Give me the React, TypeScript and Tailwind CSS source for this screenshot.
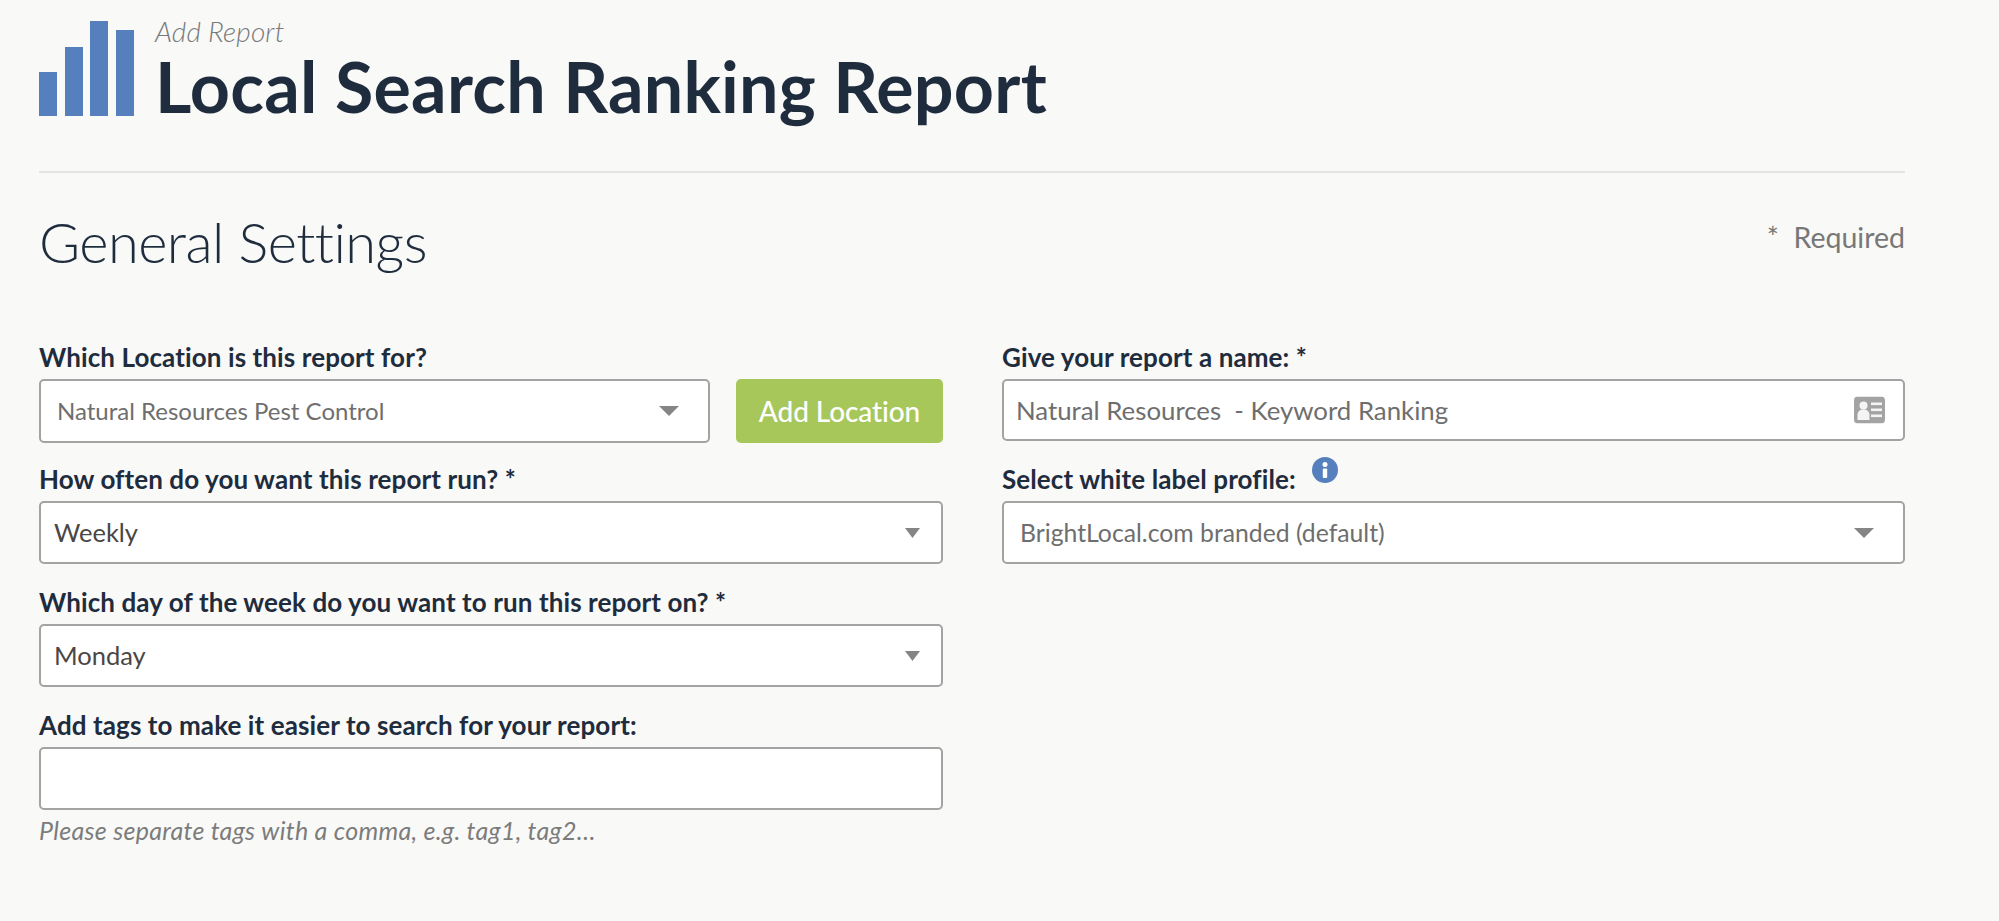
import React from "react";

const font = "font-['Lato','Noto_Sans',sans-serif]";

function Caret({ size = "m" }: { size?: "m" | "s" }) {
  return (
    <svg
      className={`pointer-events-none absolute top-1/2 -translate-y-1/2 ${size === "m" ? "right-[31px] h-[10px] w-[20px]" : "right-[23px] h-[10px] w-[15px]"}`}
      viewBox="0 0 20 10"
      preserveAspectRatio="none"
    >
      <path d="M0 0H20L10 10Z" fill="#858585" />
    </svg>
  );
}

function Field({ label, children, className = "" }: { label: React.ReactNode; children: React.ReactNode; className?: string }) {
  return (
    <div className={className}>
      <label className="block h-[38px] text-[26px] leading-[32px] font-bold tracking-[0.1px] text-[#1e2c3d]">{label}</label>
      {children}
    </div>
  );
}

function Select({ value, text = "text-[#6e6e6e] text-[24px] pl-[16px]", size = "m", h = "h-[63px]" }: { value: string; text?: string; size?: "m" | "s"; h?: string }) {
  return (
    <div className={`relative ${h} w-full`}>
      <select
        value={value}
        onChange={() => {}}
        className={`h-full w-full appearance-none rounded-[5px] border-2 border-[#a3a3a3] bg-white outline-none ${font} ${text}`}
      >
        <option>{value}</option>
      </select>
      <Caret size={size} />
    </div>
  );
}

export default function App() {
  return (
    <div className={`min-h-[921px] bg-[#f9f9f7] pl-[39px] pr-[94px] ${font}`}>
      <header className="flex h-[173px] items-start border-b-2 border-[#e4e4e2] pt-[21px]">
        <svg className="h-[95px] w-[95px] shrink-0" viewBox="0 0 95 95">
          <g fill="#5580bd">
            <rect x="0" y="51" width="18" height="44" />
            <rect x="26" y="26" width="18" height="69" />
            <rect x="51" y="0" width="18" height="95" />
            <rect x="77" y="9" width="18" height="86" />
          </g>
        </svg>
        <div className="ml-[21px] -mt-[7px]">
          <div className="text-[28px] leading-[34px] font-light italic tracking-[0.1px] text-[#77797c]">Add Report</div>
          <h1 className="text-[70px] leading-[76px] font-bold tracking-[0.25px] text-[#1e2c3d]">Local Search Ranking Report</h1>
        </div>
      </header>

      <div className="flex items-start justify-between pt-[33px]">
        <h2 className="text-[56px] leading-[72px] font-light tracking-[-0.55px] text-[#1e2c3d]">General Settings</h2>
        <div className="pt-[13px] text-[28.5px] leading-[36px] text-[#777777]">*&nbsp; Required</div>
      </div>

      <div className="mt-[63px] grid grid-cols-[904px_903px] gap-x-[59px]">
        <div className="flex flex-col">
          <Field label="Which Location is this report for?">
            <div className="flex h-[64px] gap-[26px]">
              <div className="w-[671px]">
                <Select value="Natural Resources Pest Control" h="h-[64px]" />
              </div>
              <button className="w-[207px] rounded-[5px] bg-[#a8c75b] text-[28px] font-medium tracking-[-0.1px] text-white">Add Location</button>
            </div>
          </Field>
          <Field className="mt-[20px]" label="How often do you want this report run? *">
            <Select value="Weekly" text="text-[#4a4644] text-[25.5px] pl-[13px]" size="s" />
          </Field>
          <Field className="mt-[22px]" label="Which day of the week do you want to run this report on? *">
            <Select value="Monday" text="text-[#4a4644] text-[25.5px] pl-[13px]" size="s" />
          </Field>
          <Field className="mt-[22px]" label="Add tags to make it easier to search for your report:">
            <input className="h-[63px] w-full rounded-[5px] border-2 border-[#a3a3a3] bg-white outline-none" />
          </Field>
          <p className="mt-[5px] text-[25px] leading-[30px] italic tracking-[0.3px] text-[#7c7c7c]">Please separate tags with a comma, e.g. tag1, tag2…</p>
        </div>

        <div className="flex flex-col">
          <Field label="Give your report a name: *">
            <div className="relative h-[62px]">
              <input
                readOnly
                value="Natural Resources  - Keyword Ranking"
                className="h-full w-full rounded-[5px] border-2 border-[#a3a3a3] bg-white pl-[12px] text-[25.8px] text-[#6e6e6e] outline-none"
              />
              <svg className="absolute top-1/2 right-[20px] h-[27px] w-[31px] -translate-y-1/2" viewBox="0 0 31 27">
                <rect width="31" height="27" rx="4" fill="#a3a3a3" />
                <circle cx="9.500" cy="9" r="4" fill="#f4f4f4" />
                <path d="M3.500 23.500v-5c0-3.500 2.500-5.500 6-5.500s6 2 6 5.500v5z" fill="#f4f4f4" />
                <rect x="17" y="6" width="11" height="2.600" fill="#f4f4f4" />
                <rect x="17" y="12" width="11" height="2.600" fill="#f4f4f4" />
                <rect x="17" y="18" width="11" height="2.600" fill="#f4f4f4" />
              </svg>
            </div>
          </Field>
          <Field
            className="mt-[22px]"
            label={
              <span className="relative inline-block">
                Select white label profile:
                <svg className="absolute -top-[6px] -right-[42px] h-[26px] w-[26px]" viewBox="0 0 26 26">
                  <circle cx="13" cy="13" r="13" fill="#5580bd" />
                  <circle cx="13" cy="7.500" r="2.500" fill="#fff" />
                  <rect x="10.800" y="11.500" width="4.400" height="9.500" rx="1" fill="#fff" />
                </svg>
              </span>
            }
          >
            <Select value="BrightLocal.com branded (default)" text="text-[#6e6e6e] text-[24.75px] pl-[16px]" />
          </Field>
        </div>
      </div>
    </div>
  );
}
